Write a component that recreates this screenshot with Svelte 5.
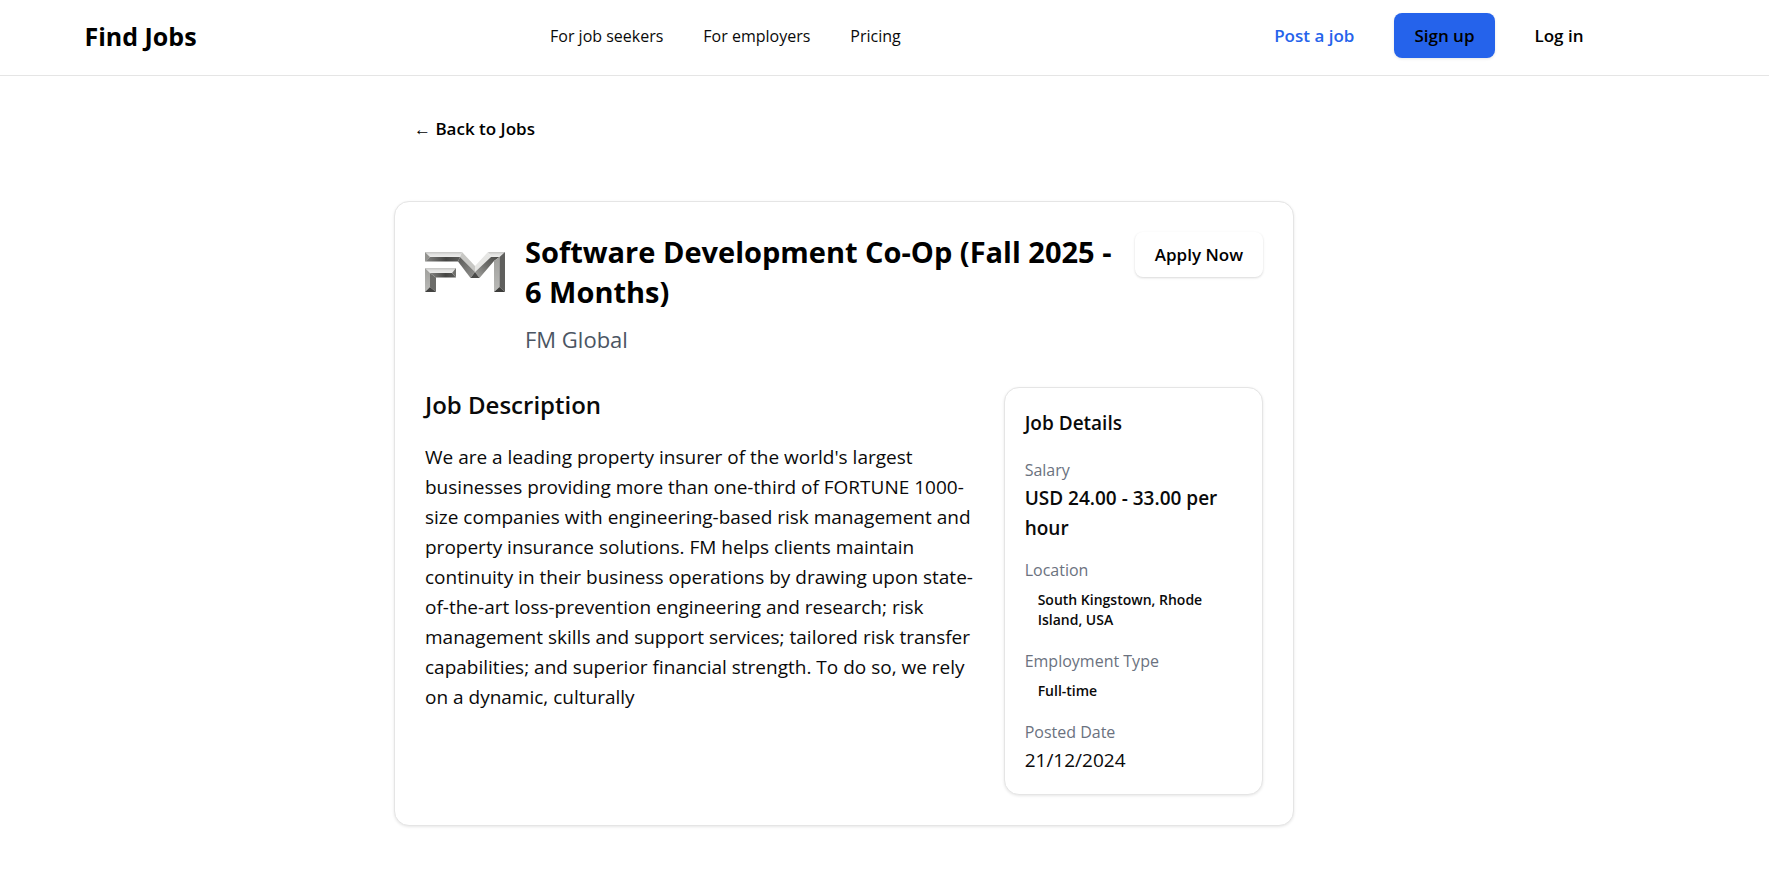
<script>
  const navLinks = ['For job seekers', 'For employers', 'Pricing'];
  const details = [
    { label: 'Salary', value: 'USD 24.00 - 33.00 per hour', kind: 'strong' },
    { label: 'Location', value: 'South Kingstown, Rhode Island, USA', kind: 'badge' },
    { label: 'Employment Type', value: 'Full-time', kind: 'badge' },
    { label: 'Posted Date', value: '21/12/2024', kind: 'plain' }
  ];
</script>

<header class="site-header">
  <div class="container bar">
    <a class="brand" href="#home">Find Jobs</a>
    <nav class="links" aria-label="Main">
      {#each navLinks as link}
        <a href="#{link.toLowerCase().replaceAll(' ', '-')}">{link}</a>
      {/each}
    </nav>
    <div class="actions">
      <a class="button accent" href="#post">Post a job</a>
      <button class="button primary" type="button">Sign up</button>
      <button class="button" type="button">Log in</button>
    </div>
  </div>
</header>

<main class="container">
  <div class="page">
    <a class="button back" href="#jobs">← Back to Jobs</a>

    <article class="card job">
      <div class="job-head">
        <svg class="logo" viewBox="0 0 80 80" role="img" aria-label="FM Global">
          <defs>
            <linearGradient id="light" x1="0" y1="0" x2="0" y2="1">
              <stop offset="0" stop-color="#c4c4c2" />
              <stop offset="0.5" stop-color="#e2e2e1" />
              <stop offset="1" stop-color="#ececeb" />
            </linearGradient>
            <linearGradient id="dark" x1="0" y1="0" x2="1" y2="0">
              <stop offset="0" stop-color="#858583" />
              <stop offset="0.6" stop-color="#454543" />
              <stop offset="1" stop-color="#5c5c5a" />
            </linearGradient>
            <linearGradient id="slope" x1="0" y1="0" x2="1" y2="1">
              <stop offset="0" stop-color="#5a5a58" />
              <stop offset="1" stop-color="#92928f" />
            </linearGradient>
            <linearGradient id="rise" x1="0" y1="1" x2="1" y2="0">
              <stop offset="0" stop-color="#a6a6a3" />
              <stop offset="0.5" stop-color="#70706d" />
              <stop offset="1" stop-color="#484846" />
            </linearGradient>
            <linearGradient id="stem" x1="0" y1="0" x2="0" y2="1">
              <stop offset="0" stop-color="#a0a09d" />
              <stop offset="1" stop-color="#b9b9b6" />
            </linearGradient>
          </defs>
          <g transform="translate(0 20)">
            <path fill="url(#light)" d="M0 0H37L35 5H5Z" />
            <path fill="#92928f" d="M0 0L5 5L0 9.500Z" />
            <path fill="url(#dark)" d="M0 9.500L5 5H35L33 9.500Z" />
            <path fill="#c8c8c5" d="M37 0L50 14V20L35 5Z" />
            <path fill="url(#slope)" d="M35 5L50 20L45.500 26L33 9.500Z" />
            <path fill="#e6e6e4" d="M50 14L63 0L66 5L50 20Z" />
            <path fill="url(#light)" d="M63 0H80L74.500 5H66Z" />
            <path fill="url(#rise)" d="M50 20L66 5H74.500L69 9L54.500 26Z" />
            <path fill="#4a4a48" d="M50 20L54.500 26H45.500Z" />
            <path fill="url(#stem)" d="M69 9L74.500 5V35L69 40Z" />
            <path fill="#5f5f5d" d="M80 0V40L74.500 35V5Z" />
            <path fill="#3c3c3a" d="M69 40L74.500 35L80 40Z" />
            <path fill="url(#light)" d="M0 16H31L27 21H5Z" />
            <path fill="url(#stem)" d="M0 16L5 21V35L0 40Z" />
            <path fill="url(#dark)" d="M31 25.500H11L5 21H27Z" />
            <path fill="#70706d" d="M31 16V25.500L27 21Z" />
            <path fill="#6c6c69" d="M5 21L11 25.500V40L5 35Z" />
            <path fill="#424240" d="M0 40L5 35L11 40Z" />
          </g>
        </svg>
        <div class="heading">
          <h1>Software Development Co-Op (Fall 2025 - 6 Months)</h1>
          <p class="company">FM Global</p>
        </div>
        <button class="button apply" type="button">Apply Now</button>
      </div>

      <div class="job-body">
        <section class="description">
          <h2>Job Description</h2>
          <p>
            We are a leading property insurer of the world's largest businesses providing more than
            one-third of FORTUNE 1000-size companies with engineering-based risk management and
            property insurance solutions. FM helps clients maintain continuity in their business
            operations by drawing upon state-of-the-art loss-prevention engineering and research;
            risk management skills and support services; tailored risk transfer capabilities; and
            superior financial strength. To do so, we rely on a dynamic, culturally
          </p>
        </section>

        <aside class="card details">
          <h3>Job Details</h3>
          <dl>
            {#each details as item}
              <div>
                <dt>{item.label}</dt>
                <dd class={item.kind}>{item.value}</dd>
              </div>
            {/each}
          </dl>
        </aside>
      </div>
    </article>
  </div>
</main>

<style>
  :global(body) {
    background: #fff;
    color: #0a0a0a;
    font-family: 'Open Sans', 'Noto Sans', sans-serif;
    font-size: 19px;
    line-height: 30px;
  }
  h1, h2, h3, p, dl, dd {
    margin: 0;
  }
  a {
    color: inherit;
    text-decoration: none;
  }
  .container {
    box-sizing: border-box;
    max-width: 1600px;
    margin: 0 auto;
    padding-right: 81px;
  }
  .site-header {
    border-bottom: 1px solid #e5e5e5;
  }
  .bar {
    display: flex;
    align-items: center;
    justify-content: space-between;
    padding-top: 13px;
    padding-bottom: 17px;
  }
  .brand {
    color: #000;
    font-size: 25px;
    font-weight: 700;
  }
  .links {
    display: flex;
    gap: 40px;
    font-size: 16px;
  }
  .actions {
    display: flex;
    gap: 20px;
  }
  .button {
    box-sizing: border-box;
    display: inline-flex;
    align-items: center;
    justify-content: center;
    flex: none;
    height: 45px;
    padding: 0 20px;
    border: 0;
    border-radius: 8px;
    background: transparent;
    color: #000;
    font: inherit;
    font-size: 17px;
    font-weight: 600;
    cursor: pointer;
  }
  .accent {
    color: #2563eb;
  }
  .primary {
    background: #2563eb;
    box-shadow: 0 1px 3px rgb(0 0 0 / 0.1);
  }
  .page {
    max-width: 900px;
    margin: 0 auto;
    padding: 30px 0 60px;
  }
  .card {
    border: 1px solid #e5e5e5;
    border-radius: 15px;
    background: #fff;
    box-shadow: 0 1px 3px rgb(0 0 0 / 0.1);
  }
  .job {
    margin-top: 50px;
    padding: 30px;
  }
  .job-head {
    display: flex;
    align-items: flex-start;
    gap: 20px;
  }
  .logo {
    flex: none;
    width: 80px;
    height: 80px;
  }
  .heading {
    flex: 1;
  }
  h1 {
    color: #000;
    font-size: 29px;
    line-height: 40px;
  }
  .company {
    margin-top: 10px;
    color: #4b5563;
    font-size: 22px;
    line-height: 35px;
  }
  .apply {
    background: #fff;
    box-shadow: 0 1px 3px rgb(0 0 0 / 0.1), 0 1px 2px rgb(0 0 0 / 0.06);
  }
  .job-body {
    display: grid;
    grid-template-columns: repeat(3, 1fr);
    gap: 30px;
    margin-top: 30px;
  }
  .description {
    grid-column: span 2;
  }
  h2 {
    margin-bottom: 20px;
    font-size: 24px;
    font-weight: 600;
    line-height: 35px;
  }
  .details {
    padding: 20px 20px 19px;
  }
  h3 {
    margin-bottom: 20px;
    font-size: 19px;
    font-weight: 600;
    line-height: 30px;
  }
  dl {
    display: grid;
    gap: 15px;
  }
  dt {
    color: #6b7280;
    font-size: 16px;
    line-height: 25px;
  }
  .strong {
    font-weight: 600;
  }
  .badge {
    padding: 7px 13px 4px;
    font-size: 14px;
    font-weight: 600;
    line-height: 20px;
  }
</style>
